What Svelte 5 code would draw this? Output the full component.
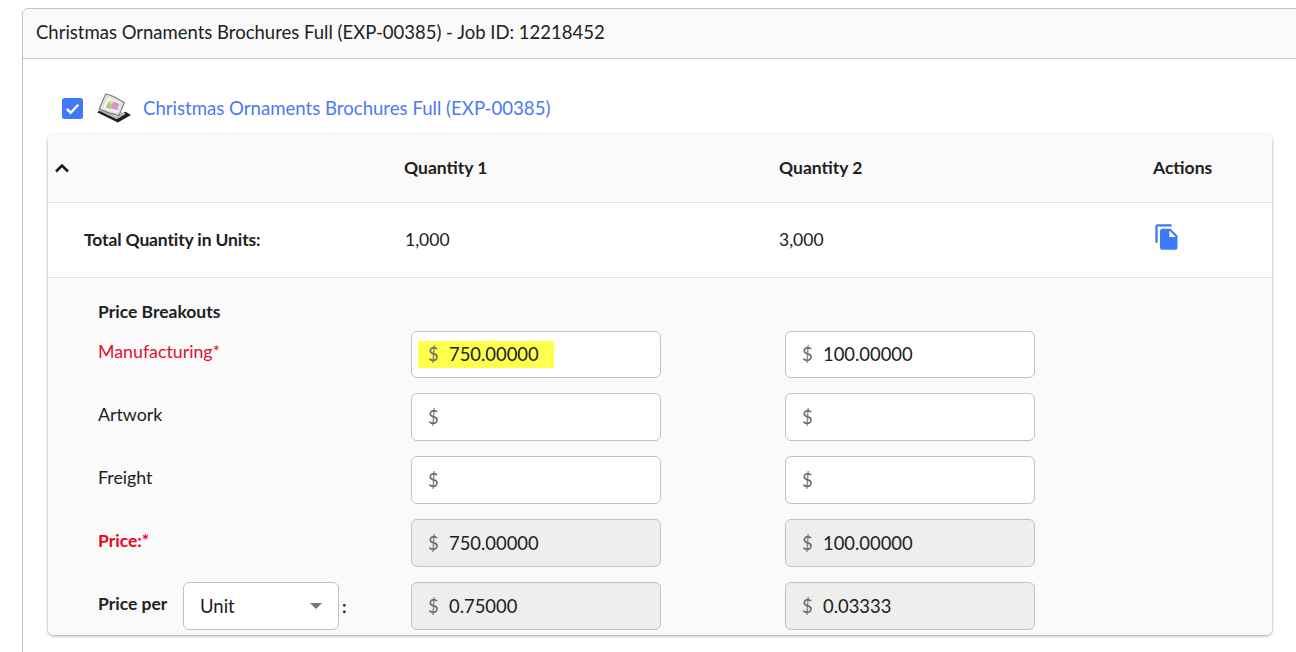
<script>
  const rows = [
    { label: "Manufacturing*", kind: "req", a: "750.00000", b: "100.00000", highlight: true },
    { label: "Artwork", a: "", b: "" },
    { label: "Freight", a: "", b: "" },
    { label: "Price:*", kind: "total", a: "750.00000", b: "100.00000", readonly: true },
  ];
</script>

<div class="card">
  <div class="card-head">Christmas Ornaments Brochures Full (EXP-00385) - Job ID: 12218452</div>
  <div class="card-body">
    <div class="product">
      <span class="check">
        <svg width="21" height="21" viewBox="0 0 21 21"><rect width="21" height="21" rx="2.5" fill="#3f79fb" /><path d="M4.8 10.8l3.9 3.900 7.500-8" fill="none" stroke="#fff" stroke-width="2.400" /></svg>
      </span>
      <svg class="thumb" width="34" height="30" viewBox="2 1 31 28" preserveAspectRatio="none">
        <path d="M2 19l19 9.500 12-7-5-3-9 5-13-7z" fill="#1e1e1e" />
        <path d="M3 17l17 8.500 8-5-2-2-7 4-12-6z" fill="#bdbdbd" />
        <path d="M4 16C6 11 8 6 10 2c6 1 12 5 17 8-2 4-3 8-5 12-6-1-12-3-18-6z" fill="#dedede" stroke="#7a7a7a" stroke-width="1" />
        <path d="M7.500 15c1.500-3.500 3-7 4.500-10 4 1 8 3 12 5.500-1.500 3-2.500 6-3.500 9-4-1-9-2.500-13-4.500z" fill="#f4f4f4" />
        <path d="M10 14.500l2.500-5.500 3.500 1.500-2 5.500z" fill="#9ccf72" />
        <path d="M12.500 9l3-1.500 3 1.500-2 4-1-1z" fill="#efe07a" />
        <path d="M16 10.500l3-1.500 2 3-2 4.500-5-1z" fill="#ea8dc4" />
        <path d="M19.500 10l3 1-2 6-2.500-.5z" fill="#b9a0e6" />
      </svg>
      <span class="product-link">Christmas Ornaments Brochures Full (EXP-00385)</span>
    </div>

    <div class="panel">
      <div class="row head">
        <div class="first">
          <svg class="chev" width="16" height="10" viewBox="0 0 16 10"><path d="M2 8.500l6-6 6 6" fill="none" stroke="#1c1c1c" stroke-width="2.600" /></svg>
        </div>
        <div>Quantity 1</div>
        <div>Quantity 2</div>
        <div>Actions</div>
      </div>
      <div class="row qty">
        <div class="first qty-label">Total Quantity in Units:</div>
        <div class="num">1,000</div>
        <div>3,000</div>
        <div>
          <svg class="copy" width="28" height="28" viewBox="0 0 24 24">
            <path d="M16 1H4c-1.100 0-2 .9-2 2v14h2V3h12V1zm-1 4l6 6v10c0 1.100-.9 2-2 2H7.990C6.890 23 6 22.100 6 21l.01-14c0-1.100.89-2 1.990-2h7zm-1 7h5.500L14 6.500V12z" fill="#3f79fb" />
          </svg>
        </div>
      </div>
      <div class="breakouts">
        <div class="section-title">Price Breakouts</div>
        <div class="grid">
          {#each rows as r}
            <div class="label {r.kind ?? ''}">{r.label}</div>
            {#each [r.a, r.b] as v, i}
              <div class="field" class:readonly={r.readonly}>
                <span class="amount" class:marked={r.highlight && i === 0}><span class="dollar">$</span><span class="val">{v}</span></span>
              </div>
            {/each}
          {/each}
          <div class="per">
            <span class="per-text">Price per</span>
            <div class="select"><span>Unit</span><i class="caret"></i></div>
            <span class="colon">:</span>
          </div>
          <div class="field readonly"><span class="amount"><span class="dollar">$</span><span class="val">0.75000</span></span></div>
          <div class="field readonly"><span class="amount"><span class="dollar">$</span><span class="val">0.03333</span></span></div>
        </div>
      </div>
    </div>
  </div>
</div>

<style>
  :global(body) {
    margin: 0;
    background: #fff;
    font-family: Lato, "Liberation Sans", sans-serif;
    color: #212121;
    overflow: hidden;
  }
  .card {
    margin: 8px 0 0 22px;
    width: 1290px;
    height: 660px;
    border: 1px solid #c4c4c4;
    border-radius: 6px 0 0 0;
    box-sizing: border-box;
  }
  .card-head {
    height: 50px;
    box-sizing: border-box;
    padding: 0 13px 4px;
    display: flex;
    align-items: center;
    background: #fafafa;
    border-bottom: 1px solid #c8c8c8;
    border-radius: 6px 0 0 0;
    font-size: 18.5px;
  }
  .card-body {
    padding: 0 0 0 25px;
  }
  .product {
    height: 75px;
    display: flex;
    align-items: center;
    padding: 23px 0 0 14px;
    box-sizing: border-box;
  }
  .check {
    width: 21px;
    height: 21px;
    display: block;
  }
  .check svg {
    display: block;
  }
  .thumb {
    margin: -1px 0 0 14px;
  }
  .product-link {
    margin-left: 12px;
    font-size: 18.6px;
    color: #4d78f5;
  }
  .panel {
    width: 1224px;
    height: 501px;
    border-radius: 6px;
    box-shadow: 0 1px 3px rgba(0, 0, 0, 0.38);
    background: #fff;
    overflow: hidden;
  }
  .row {
    display: grid;
    grid-template-columns: 356px 375px 374px 1fr;
    align-items: center;
    font-size: 17.500px;
  }
  .head {
    height: 69px;
    padding-bottom: 2px;
    background: #fafafa;
    border-bottom: 1px solid #e0e0e0;
    box-sizing: border-box;
    font-weight: 700;
  }
  .first {
    display: flex;
    align-items: center;
  }
  .chev {
    margin: 2px 0 0 6px;
  }
  .qty {
    height: 75px;
    padding-bottom: 1px;
    border-bottom: 1px solid #e0e0e0;
    box-sizing: border-box;
  }
  .qty-label {
    padding-left: 36px;
    font-weight: 700;
    letter-spacing: -0.13px;
  }
  .num {
    padding-left: 1px;
  }
  .copy {
    display: block;
    margin-top: -5px;
  }
  .breakouts {
    background: #fafafa;
    height: 357px;
    padding: 24px 0 0 50px;
    box-sizing: border-box;
  }
  .section-title {
    font-size: 17.500px;
    font-weight: 700;
    line-height: 20px;
  }
  .grid {
    margin-top: 9px;
    display: grid;
    grid-template-columns: 313px 250px 250px;
    grid-template-rows: 47px;
    grid-auto-rows: 48px;
    row-gap: 15px;
  }
  .label {
    font-size: 17.800px;
    line-height: 20px;
    padding-top: 11px;
  }
  .label.req {
    color: #e0102f;
    padding-top: 10px;
  }
  .label.total {
    color: #f0001f;
    font-weight: 700;
    font-size: 17.500px;
    padding-top: 12px;
  }
  .field {
    width: 250px;
    box-sizing: border-box;
    border: 1px solid #c2c2c2;
    border-radius: 6px;
    background: #fff;
    font-size: 18.400px;
    display: flex;
    align-items: center;
    padding: 0 0 1px 6px;
  }
  .field + .field {
    margin-left: 124px;
  }
  .field.readonly {
    background: #eeeeee;
  }
  .amount {
    display: inline-flex;
    align-items: center;
    height: 27px;
    padding: 0 15px 0 10px;
  }
  .amount.marked {
    background: #ffff4d;
  }
  .dollar {
    color: #6b6b6b;
    width: 21px;
  }
  .per {
    display: flex;
    align-items: center;
    font-size: 17.500px;
  }
  .per-text {
    font-weight: 700;
    width: 85px;
    margin-top: -6px;
  }
  .select {
    width: 156px;
    height: 48px;
    box-sizing: border-box;
    border: 1px solid #c2c2c2;
    border-radius: 6px;
    background: #fff;
    display: flex;
    align-items: center;
    justify-content: space-between;
    padding: 0 16px 0 16px;
    font-size: 18.500px;
  }
  .caret {
    width: 0;
    height: 0;
    border-left: 6px solid transparent;
    border-right: 6px solid transparent;
    border-top: 6px solid #757575;
  }
  .colon {
    margin-left: 3px;
    font-weight: 700;
  }
</style>
